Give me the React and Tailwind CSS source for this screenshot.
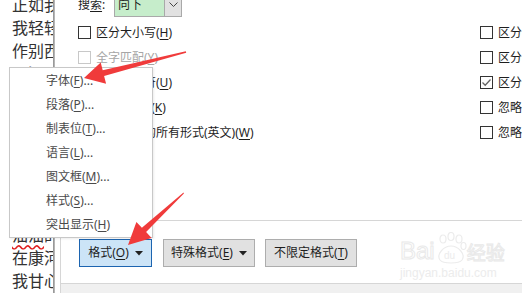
import React from "react";

const F = "font-['Noto_Sans','Noto_Sans_CJK_SC',sans-serif]";

function Box({ checked, disabled }) {
  return (
    <span
      className={`w-[13px] h-[13px] border ${disabled ? "border-[#c8c8c8]" : "border-[#333333]"} bg-white flex items-center justify-center shrink-0`}
    >
      {checked && (
        <svg width="11" height="11" viewBox="0 0 11 11">
          <polyline points="1.5,5.5 4.2,8.2 9.5,2.5" fill="none" stroke="#666" strokeWidth="1.3" />
        </svg>
      )}
    </span>
  );
}

function U({ children }) {
  return <span className="underline underline-offset-2 decoration-1">{children}</span>;
}

function Row({ checked, disabled, children }) {
  return (
    <div className={`h-[25px] flex items-center gap-[5px] whitespace-nowrap ${disabled ? "text-[#a6a6a6]" : "text-[#1e1e1e]"}`}>
      <Box checked={checked} disabled={disabled} />
      <span>{children}</span>
    </div>
  );
}

function Tri() {
  return (
    <svg width="8" height="5" viewBox="0 0 8 5" className="shrink-0">
      <polygon points="0,0 8,0 4,4.5" fill="#222" />
    </svg>
  );
}

export default function App() {
  const docLines = [
    "正如我轻轻的来",
    "我轻轻的招手",
    "作别西天的云彩",
    "那河畔的金柳",
    "是夕阳中的新娘",
    "波光里的艳影",
    "在我的心头荡漾",
    "软泥上的青荇",
    "",
    "",
  ];
  const menu = [
    ["字体(", "F", ")..."],
    ["段落(", "P", ")..."],
    ["制表位(", "T", ")..."],
    ["语言(", "L", ")..."],
    ["图文框(", "M", ")..."],
    ["样式(", "S", ")..."],
    ["突出显示(", "H", ")"],
  ];
  return (
    <div className={`relative w-[522px] h-[293px] overflow-hidden bg-white flex ${F}`}>
      {/* document strip */}
      <div className="w-[53px] shrink-0 overflow-hidden h-full">
        <div className="-mt-[7px] pl-[12px] text-[16px] leading-[23px] text-[#333333] whitespace-nowrap font-['Noto_Sans_CJK_SC',sans-serif]">
          {docLines.map((l, i) => (
            <div key={i} className="h-[23px]">{l}</div>
          ))}
          <div className="h-[23px]">
            <span className="underline decoration-wavy decoration-[#e02020] underline-offset-[3px]">油油</span>的在水底招摇
          </div>
          <div className="h-[23px]">在康河的柔波里</div>
          <div className="h-[23px]">我甘心做一条水草</div>
        </div>
      </div>
      <div className="w-[2px] shrink-0 h-full bg-gradient-to-r from-[#8c8c8c] to-[#c4c4c4]" />

      {/* dialog */}
      <div className="flex-1 flex flex-col text-[12px] min-w-0">
        <div className="h-[220px] pl-[23px] overflow-hidden">
          <div className="-mt-[8px] h-[25px] flex items-center">
            <span className="w-[36px] text-[#1e1e1e]">搜<U>索</U>:</span>
            <div className="w-[50px] h-[25px] bg-[#c6edcb] border border-[#a9a9a9] border-r-0 flex items-center pl-[3px] text-[#1e1e1e]">
              向下
            </div>
            <div className="w-[18px] h-[25px] bg-[#e1e1e1] border border-[#a9a9a9] flex items-center justify-center">
              <svg width="9" height="6" viewBox="0 0 9 6">
                <polyline points="0.5,0.5 4.5,4.5 8.5,0.5" fill="none" stroke="#444" strokeWidth="1" />
              </svg>
            </div>
          </div>
          <div className="mt-[3px] flex">
            <div className="w-[402px] shrink-0">
              <Row>区分大小写(<U>H</U>)</Row>
              <Row disabled>全字匹配(<U>Y</U>)</Row>
              <Row>使用通配符(<U>U</U>)</Row>
              <Row>同音(英文)(<U>K</U>)</Row>
              <Row>查找单词的所有形式(英文)(<U>W</U>)</Row>
            </div>
            <div className="shrink-0">
              <Row>区分前缀(<U>X</U>)</Row>
              <Row>区分后缀(<U>T</U>)</Row>
              <Row checked>区分全/半角(<U>M</U>)</Row>
              <Row>忽略标点符号(<U>S</U>)</Row>
              <Row>忽略空格(<U>W</U>)</Row>
            </div>
          </div>
        </div>
        <div className="ml-[5px] flex-1 flex flex-col border-l border-[#d6d6d6]">
          <div className="h-[64px] border-t border-b border-[#d6d6d6] pt-[18px] pl-[18px] flex items-start">
            <div className="w-[73px] h-[28px] bg-[#cce4f7] border border-[#1c64b0] flex items-center justify-center gap-[6px] text-[#1e1e1e]">
              <span>格式(<U>O</U>)</span>
              <Tri />
            </div>
            <div className="ml-[11px] w-[92px] h-[28px] bg-[#e1e1e1] border border-[#adadad] flex items-center justify-center gap-[6px] text-[#1e1e1e]">
              <span>特殊格式(<U>E</U>)</span>
              <Tri />
            </div>
            <div className="ml-[10px] w-[92px] h-[28px] bg-[#e1e1e1] border border-[#adadad] flex items-center justify-center text-[#1e1e1e]">
              <span>不限定格式(<U>T</U>)</span>
            </div>
          </div>
          <div className="flex-1 bg-[#f0f0f0]" />
        </div>
      </div>

      {/* context menu */}
      <div className="absolute left-[9px] top-[67px] w-[144px] bg-white border border-[#c8c8c8] pt-[1px] text-[12px] text-[#4a4a4a] shadow-[1px_1px_2px_rgba(0,0,0,0.08)]">
        {menu.map(([a, k, b], i) => (
          <div key={i} className="h-[24px] flex items-center pl-[36px] whitespace-nowrap">
            {a}
            <U>{k}</U>
            {b}
          </div>
        ))}
      </div>

      {/* Baidu watermark */}
      <div className="absolute left-[400px] top-[232px] text-[#f1f1f1] pointer-events-none">
        <div className="flex items-end h-[32px]">
          <span className="text-[24px] leading-[26px] font-['Liberation_Sans',sans-serif] [-webkit-text-stroke:1px_#e9e9e9] text-white">Bai</span>
          <svg width="32" height="34" viewBox="0 0 32 34" className="-mb-[2px]">
            <g fill="none" stroke="#ececec" strokeWidth="1.2">
              <ellipse cx="8" cy="7" rx="3" ry="4" />
              <ellipse cx="16" cy="4.5" rx="3" ry="4" />
              <ellipse cx="24" cy="7" rx="3" ry="4" />
              <ellipse cx="28.5" cy="14" rx="2.5" ry="3.5" />
              <path d="M5 28 C1 22 9 14 16 14 C23 14 31 22 27 28 C24 32 8 32 5 28 Z" />
            </g>
            <text x="9" y="27" fontSize="10" fill="#ececec" fontFamily="Liberation Sans">du</text>
          </svg>
          <span className="text-[19px] leading-[24px] font-['Noto_Sans_CJK_SC',sans-serif] [-webkit-text-stroke:1px_#e9e9e9] text-white">经验</span>
        </div>
        <div className="text-[12px] leading-[14px] mt-[2px] font-['Liberation_Sans',sans-serif] text-[#ececec]">jingyan.baidu.com</div>
      </div>

      {/* red annotation arrows */}
      <svg className="absolute left-0 top-0 pointer-events-none" width="522" height="293" viewBox="0 0 522 293">
        <polygon
          points="185.8,51.3 102.7,70.2 100.7,62.4 84,78 106.1,83.8 104.1,76.0 186.2,52.7"
          fill="#f03b3b"
        />
        <polygon
          points="183.5,192.5 141.9,227.7 136.4,221.9 128,245 151.6,237.9 146.1,232.1 183.9,193.5"
          fill="#f03b3b"
        />
      </svg>
    </div>
  );
}
